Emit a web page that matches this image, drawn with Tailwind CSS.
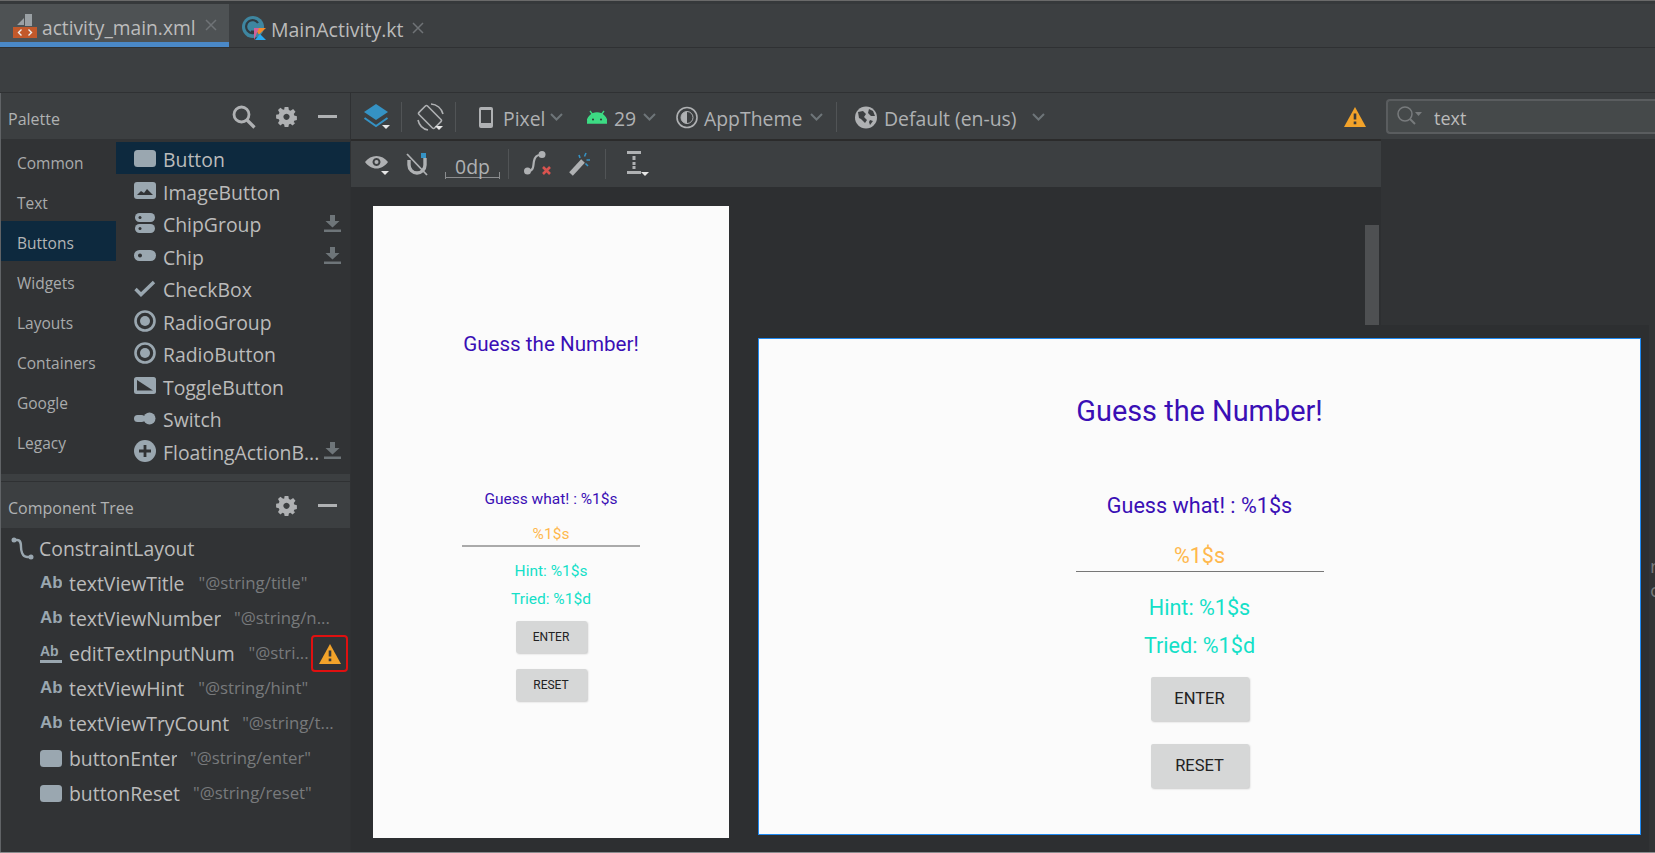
<!DOCTYPE html>
<html>
<head>
<meta charset="utf-8">
<script src="https://cdn.jsdelivr.net/npm/@tailwindcss/browser@4"></script>
</head>
<body class="m-0 overflow-hidden bg-[#313335]">
<svg class="hidden" width="0" height="0">
  <symbol id="gear" viewBox="0 0 20 20"><path fill="#afb1b3" fill-rule="evenodd" d="M8 0h4l.5 3 1.8.8L17 2l2.5 3-1.8 2.4.5 1.6 2.800.8v4l-2.800.6-.6 1.700L19.200 17 16.500 19.500 14 17.800l-1.500.6L12 21H8l-.5-2.600-1.600-.6-2.400 1.700L1 17l1.500-2.500-.6-1.700L-1 12.200v-4l2.900-.6.600-1.800L1 3.200 3.500.700 6 2.500 7.500 2.900zM10 7a3.300 3.300 0 1 0 .01 0z" transform="translate(1 1) scale(.9)"/></symbol>
  <symbol id="dl" viewBox="0 0 17 17"><path fill="#6e7579" d="M6 0h5v6h4.500L8.500 12.500 1.500 6H6zM0 14.500h17V17H0z"/></symbol>
  <symbol id="warn" viewBox="0 0 22 20"><path fill="#f2a32a" d="M11 0l11 20H0z"/><path fill="#3a3a3a" d="M9.700 6.500h2.600v6h-2.600zM9.700 14.500h2.600v2.800h-2.600z"/></symbol>
  <symbol id="ab" viewBox="0 0 22 18"><text x="0" y="13" font-family="Liberation Sans" font-weight="700" font-size="17" fill="#9aa7b0">Ab</text></symbol>
  <symbol id="btn" viewBox="0 0 22 17"><rect width="22" height="17" rx="3.500" fill="#9aa7b0"/></symbol>
  <symbol id="chev" viewBox="0 0 13 8"><path fill="none" stroke="#6e7579" stroke-width="2" d="M1 1l5.500 5.500L12 1"/></symbol>
</svg>

<div class="relative w-[1655px] h-[853px] overflow-hidden flex flex-col font-['Open_Sans',sans-serif] text-[#bbbbbb]">

  <!-- top strip + tabs -->
  <div class="h-[48px] shrink-0 bg-[#3c3f41] border-t border-t-[#6a6a6a] flex flex-col">
    <div class="h-[4px] bg-[#36393b]"></div>
    <div class="flex-1 flex border-b border-[#2f3133]">
      <div class="w-[229px] h-[43px] bg-[#4e5254] border-b-[5px] border-[#4a88c7] flex items-center pl-[13px]">
        <svg width="24" height="24" viewBox="0 0 24 24" class="shrink-0 mt-[6px]"><path fill="#9aa0a4" d="M4 11L11 4v7zM12 0h7v12H4v0h8z"/><path fill="#9aa0a4" d="M12 0h7v12h-7z"/><rect x="0" y="13" width="24" height="11" fill="#c2592b"/><path fill="none" stroke="#eeeeee" stroke-width="1.400" d="M8.500 15.500l-3 3 3 3M15.500 15.500l3 3-3 3"/></svg>
        <span class="ml-[5px] w-[152px] text-[19.200px] leading-none whitespace-nowrap text-[#bcbcbc] mt-[9px]">activity_main.xml</span>
        <svg width="12" height="12" viewBox="0 0 12 12" class="ml-[11px] mt-[4px]"><path stroke="#6f7376" stroke-width="1.500" d="M1 1l10 10M11 1L1 11"/></svg>
      </div>
      <div class="flex items-center pl-[13px] h-[43px]">
        <svg width="24" height="24" viewBox="0 0 24 24" class="shrink-0 mt-[5px]"><circle cx="11" cy="11" r="11" fill="#3e86a0"/><path fill="none" stroke="#2f3b42" stroke-width="2.200" d="M16 7a6.500 6.500 0 1 0-1 8.500H9"/><path fill="#f28a2a" d="M12 12h12l-7 6.500z"/><path fill="#29a9ef" d="M24 24H13l5-6z"/><path fill="#d0609a" d="M12 12h5l-5 12z"/></svg>
        <span class="ml-[5px] text-[19.500px] leading-none whitespace-nowrap w-[131px] mt-[9px]">MainActivity.kt</span>
        <svg width="12" height="12" viewBox="0 0 12 12" class="ml-[10px] mt-[4px]"><path stroke="#6f7376" stroke-width="1.500" d="M1 1l10 10M11 1L1 11"/></svg>
      </div>
    </div>
  </div>

  <!-- empty toolbar -->
  <div class="h-[45px] shrink-0 bg-[#3c3f41] border-b border-[#2f3133]"></div>

  <div class="flex-1 flex min-h-0">
    <!-- left column -->
    <div class="w-[351px] shrink-0 flex flex-col border-l border-[#606366] border-r-[1px] border-r-[#2f3133] bg-[#313335]">
      <!-- palette header -->
      <div class="h-[46px] shrink-0 bg-[#3c3f41] flex items-center">
        <span class="ml-[7px] w-[53px] text-[16px] text-[#b0b2b3] leading-none mt-[6px]">Palette</span>
        <svg width="24" height="24" viewBox="0 0 24 24" class="ml-[171px] mt-[1px]"><circle cx="9.500" cy="9.500" r="7.500" fill="none" stroke="#afb1b3" stroke-width="2.800"/><path stroke="#afb1b3" stroke-width="3.200" d="M15 15l7.500 7.500"/></svg>
        <svg width="21" height="21" class="ml-[20px] mt-[1px]"><use href="#gear"/></svg>
        <span class="ml-[21px] w-[19px] h-[3px] bg-[#afb1b3] mt-[1px]"></span>
      </div>
      <!-- palette body -->
      <div class="h-[335px] shrink-0 flex">
        <div class="w-[115px] shrink-0 flex flex-col pt-[2px] text-[15.500px] text-[#a9abac]">
          <div class="h-[40px] flex items-center pl-[16px] pt-[6px]">Common</div>
          <div class="h-[40px] flex items-center pl-[16px] pt-[6px]">Text</div>
          <div class="h-[40px] flex items-center pl-[16px] pt-[6px] bg-[#0d293e] text-[#b3b5b6]">Buttons</div>
          <div class="h-[40px] flex items-center pl-[16px] pt-[6px]">Widgets</div>
          <div class="h-[40px] flex items-center pl-[16px] pt-[6px]">Layouts</div>
          <div class="h-[40px] flex items-center pl-[16px] pt-[6px]">Containers</div>
          <div class="h-[40px] flex items-center pl-[16px] pt-[6px]">Google</div>
          <div class="h-[40px] flex items-center pl-[16px] pt-[6px]">Legacy</div>
        </div>
        <div class="flex-1 flex flex-col pt-[3px] text-[19.400px]">
          <div class="h-[32px] flex items-center pl-[18px] bg-[#0d293e]"><svg width="22" height="17"><use href="#btn"/></svg><span class="ml-[7px] leading-none mt-[4px]">Button</span></div>
          <div class="h-[33px] flex items-center pl-[18px]"><svg width="22" height="17" viewBox="0 0 22 17"><rect width="22" height="17" rx="3" fill="#9aa7b0"/><path fill="#313335" d="M3 13l4-4 3 2 3-4 6 6z"/></svg><span class="ml-[7px] leading-none mt-[4px]">ImageButton</span></div>
          <div class="h-[32px] flex items-center pl-[18px] pr-[9px]"><svg width="22" height="20" viewBox="0 0 22 20"><rect x="1" width="20" height="9" rx="4.500" fill="#9aa7b0"/><rect x="1" y="11" width="20" height="9" rx="4.500" fill="#9aa7b0"/><circle cx="6" cy="4.500" r="1.500" fill="#313335"/><circle cx="6" cy="15.500" r="1.500" fill="#313335"/></svg><span class="ml-[7px] leading-none flex-1 mt-[4px]">ChipGroup</span><svg width="17" height="19"><use href="#dl"/></svg></div>
          <div class="h-[33px] flex items-center pl-[18px] pr-[9px]"><svg width="22" height="11" viewBox="0 0 22 11"><rect width="22" height="11" rx="5.500" fill="#9aa7b0"/><circle cx="6" cy="5.500" r="2" fill="#313335"/></svg><span class="ml-[7px] leading-none flex-1 mt-[4px]">Chip</span><svg width="17" height="19"><use href="#dl"/></svg></div>
          <div class="h-[32px] flex items-center pl-[18px]"><svg width="22" height="17" viewBox="0 0 22 17"><path fill="none" stroke="#9aa7b0" stroke-width="3.400" d="M1.500 9l5.500 5.500L20 2"/></svg><span class="ml-[7px] leading-none mt-[4px]">CheckBox</span></div>
          <div class="h-[33px] flex items-center pl-[18px]"><svg width="22" height="22" viewBox="0 0 22 22"><circle cx="11" cy="11" r="9.500" fill="none" stroke="#9aa7b0" stroke-width="2.600"/><circle cx="11" cy="11" r="5" fill="#9aa7b0"/></svg><span class="ml-[7px] leading-none mt-[4px]">RadioGroup</span></div>
          <div class="h-[32px] flex items-center pl-[18px]"><svg width="22" height="22" viewBox="0 0 22 22"><circle cx="11" cy="11" r="9.500" fill="none" stroke="#9aa7b0" stroke-width="2.600"/><circle cx="11" cy="11" r="5" fill="#9aa7b0"/></svg><span class="ml-[7px] leading-none mt-[4px]">RadioButton</span></div>
          <div class="h-[33px] flex items-center pl-[18px]"><svg width="22" height="17" viewBox="0 0 22 17"><rect width="22" height="17" rx="2.500" fill="#9aa7b0"/><path fill="#313335" d="M3 3v10.500h16z"/></svg><span class="ml-[7px] leading-none mt-[4px]">ToggleButton</span></div>
          <div class="h-[32px] flex items-center pl-[18px]"><svg width="22" height="13" viewBox="0 0 22 13"><rect y="3" width="11" height="7" rx="3.500" fill="#9aa7b0"/><circle cx="15.500" cy="6.500" r="6" fill="#9aa7b0"/></svg><span class="ml-[7px] leading-none mt-[4px]">Switch</span></div>
          <div class="h-[33px] flex items-center pl-[18px] pr-[9px]"><svg width="22" height="22" viewBox="0 0 22 22" class="shrink-0"><circle cx="11" cy="11" r="11" fill="#9aa7b0"/><path stroke="#313335" stroke-width="2.800" d="M11 5v12M5 11h12"/></svg><span class="ml-[7px] leading-none flex-1 whitespace-nowrap mt-[4px]">FloatingActionB...</span><svg width="17" height="19" class="shrink-0"><use href="#dl"/></svg></div>
        </div>
      </div>
      <div class="h-[8px] shrink-0 bg-[#3c3f41] border-b border-[#2f3133]"></div>
      <!-- tree header -->
      <div class="h-[46px] shrink-0 bg-[#3c3f41] flex items-center">
        <span class="ml-[7px] w-[248px] whitespace-nowrap text-[16px] text-[#b0b2b3] leading-none mt-[5px]">Component Tree</span>
        <svg width="21" height="21" class="ml-[20px]"><use href="#gear"/></svg>
        <span class="ml-[21px] w-[19px] h-[3px] bg-[#afb1b3]"></span>
      </div>
      <!-- tree -->
      <div class="flex-1 flex flex-col pt-[3px] text-[19.400px]">
        <div class="h-[35px] flex items-center pl-[10px]"><svg width="23" height="23" viewBox="0 0 23 23"><circle cx="3" cy="3" r="2.500" fill="#9aa7b0"/><circle cx="20" cy="20" r="2.500" fill="#9aa7b0"/><path fill="none" stroke="#9aa7b0" stroke-width="2.400" d="M3 3h3c4 0 4 4 4 7s1 10 6 10h4"/></svg><span class="ml-[5px] leading-none">ConstraintLayout</span></div>
        <div class="h-[35px] flex items-center pl-[39px]"><svg width="22" height="18"><use href="#ab"/></svg><span class="ml-[7px] leading-none">textViewTitle</span><span class="ml-[14px] text-[16.800px] text-[#787a7c] leading-none whitespace-nowrap">"@string/title"</span></div>
        <div class="h-[35px] flex items-center pl-[39px]"><svg width="22" height="18"><use href="#ab"/></svg><span class="ml-[7px] leading-none w-[152px] whitespace-nowrap overflow-hidden">textViewNumber</span><span class="ml-[13px] text-[16.800px] text-[#787a7c] leading-none whitespace-nowrap">"@string/n...</span></div>
        <div class="h-[35px] flex items-center pl-[39px] relative"><svg width="22" height="20" viewBox="0 0 22 20"><text x="0" y="12" font-family="Liberation Sans" font-weight="700" font-size="14" fill="#9aa7b0">Ab</text><rect y="16" width="22" height="3" fill="#9aa7b0"/></svg><span class="ml-[7px] leading-none">editTextInputNum</span><span class="ml-[14px] text-[16.800px] text-[#787a7c] leading-none whitespace-nowrap">"@stri...</span>
          <div class="absolute left-[310px] top-[-1px] w-[37px] h-[37px] border-2 border-[#e01010] rounded-[4px] flex items-center justify-center"><svg width="22" height="20"><use href="#warn"/></svg></div>
        </div>
        <div class="h-[35px] flex items-center pl-[39px]"><svg width="22" height="18"><use href="#ab"/></svg><span class="ml-[7px] leading-none">textViewHint</span><span class="ml-[14px] text-[16.800px] text-[#787a7c] leading-none whitespace-nowrap">"@string/hint"</span></div>
        <div class="h-[35px] flex items-center pl-[39px]"><svg width="22" height="18"><use href="#ab"/></svg><span class="ml-[7px] leading-none">textViewTryCount</span><span class="ml-[13px] text-[16.800px] text-[#787a7c] leading-none whitespace-nowrap">"@string/t...</span></div>
        <div class="h-[35px] flex items-center pl-[39px]"><svg width="22" height="17"><use href="#btn"/></svg><span class="ml-[7px] w-[108px] overflow-hidden whitespace-nowrap leading-none">buttonEnter</span><span class="ml-[13px] text-[16.800px] text-[#787a7c] leading-none whitespace-nowrap">"@string/enter"</span></div>
        <div class="h-[35px] flex items-center pl-[39px]"><svg width="22" height="17"><use href="#btn"/></svg><span class="ml-[7px] leading-none">buttonReset</span><span class="ml-[13px] text-[16.800px] text-[#787a7c] leading-none whitespace-nowrap">"@string/reset"</span></div>
      </div>
    </div>

    <!-- design column -->
    <div class="w-[1030px] shrink-0 flex flex-col">
      <div class="h-[48px] shrink-0 bg-[#3c3f41] flex items-center pt-[2px] border-b-[2px] border-[#2b2b2b] text-[19.400px] text-[#afb1b3]">
        <svg width="28" height="28" viewBox="0 0 28 28" class="ml-[12px]"><path fill="#3592c4" d="M13 1l12 8-12 8L1 9z"/><path fill="none" stroke="#3592c4" stroke-width="2" d="M1.500 15l11.500 8 11.500-8"/><path fill="#e6e6e6" d="M19 22h8l-4 4z"/></svg>
        <span class="ml-[10px] w-px h-[30px] bg-[#515456]"></span>
        <svg width="28" height="28" viewBox="0 0 28 28" class="ml-[15px]"><g fill="none" stroke="#afb1b3" stroke-width="1.600"><rect x="7" y="3" width="12" height="22" rx="1.500" transform="rotate(-45 13 14)"/><path d="M14 1A13 13 0 0 1 26 11M1 17A13 13 0 0 0 11 27"/></g><path fill="#e6e6e6" d="M18 23h8l-4 4z"/></svg>
        <span class="ml-[10px] w-px h-[30px] bg-[#515456]"></span>
        <svg width="14" height="21" viewBox="0 0 14 21" class="ml-[23px]"><path fill="#afb1b3" fill-rule="evenodd" d="M2 0h10a2 2 0 0 1 2 2v17a2 2 0 0 1-2 2H2a2 2 0 0 1-2-2V2a2 2 0 0 1 2-2zM2 3v13h10V3z"/></svg>
        <span class="ml-[10px] leading-none w-[40px] mt-[3px]">Pixel</span>
        <svg width="13" height="8" class="ml-[7px]"><use href="#chev"/></svg>
        <svg width="20" height="14" viewBox="0 0 20 14" class="ml-[24px]"><path fill="#3ddc84" d="M0 13a10 10 0 0 1 20 0zM3 1l3 4M17 1l-3 4" stroke="#3ddc84" stroke-width="1.300"/><circle cx="6" cy="9.500" r="1" fill="#313335"/><circle cx="14" cy="9.500" r="1" fill="#313335"/></svg>
        <span class="ml-[7px] leading-none w-[22px] mt-[3px]">29</span>
        <svg width="13" height="8" class="ml-[7px]"><use href="#chev"/></svg>
        <svg width="22" height="23" viewBox="0 0 22 23" class="ml-[20px]"><circle cx="11" cy="11.500" r="10" fill="none" stroke="#afb1b3" stroke-width="1.600"/><path fill="#afb1b3" d="M11 5.500a6 6 0 0 0 0 12z"/><circle cx="11" cy="11.500" r="6" fill="none" stroke="#afb1b3"/></svg>
        <span class="ml-[6px] leading-none w-[100px] mt-[3px]">AppTheme</span>
        <svg width="13" height="8" class="ml-[6px]"><use href="#chev"/></svg>
        <span class="ml-[13px] w-px h-[30px] bg-[#515456]"></span>
        <svg width="22" height="23" viewBox="0 0 22 23" class="ml-[18px]"><circle cx="11" cy="11.500" r="11" fill="#afb1b3"/><path fill="#3c3f41" d="M3 6l5-1 3 3-2 3 3 3-2 3-4-4-2-1zM14 3l4 2 2 5-4 0-3-3zM15 14l3 1-3 4-1-3z"/></svg>
        <span class="ml-[7px] leading-none w-[134px] whitespace-nowrap mt-[3px]">Default (en-us)</span>
        <svg width="13" height="8" class="ml-[14px]"><use href="#chev"/></svg>
        <svg width="22" height="20" class="ml-[299px]"><use href="#warn"/></svg>
      </div>
      <div class="h-[46px] shrink-0 bg-[#3c3f41] flex items-center text-[#afb1b3]">
        <svg width="25" height="23" viewBox="0 0 25 23" class="ml-[14px]"><path fill="#afb1b3" fill-rule="evenodd" d="M0 9c3-4 7-6 11.500-6S20 5 23 9c-3 4-7 6.500-11.500 6.500S3 13 0 9zm11.500-4a4 4 0 1 0 .01 0z"/><circle cx="11.500" cy="9" r="2" fill="#afb1b3"/><path fill="#e6e6e6" d="M16 18h8l-4 4z"/></svg>
        <svg width="22" height="23" viewBox="0 0 22 23" class="ml-[16px]"><path fill="none" stroke="#afb1b3" stroke-width="3.400" d="M3 7v5a8 8 0 0 0 16 0V5"/><path stroke="#afb1b3" stroke-width="1.800" d="M1 1l20 21"/><rect x="15" width="5" height="5" fill="#3592c4"/></svg>
        <div class="ml-[17px] w-[55px] h-[28px] flex flex-col items-center justify-end border-b border-[#8a8c8e] relative">
          <span class="text-[19.400px] leading-none mb-[1px]">0dp</span>
          <span class="absolute left-0 bottom-[-2px] w-px h-[7px] bg-[#8a8c8e]"></span><span class="absolute right-0 bottom-[-2px] w-px h-[7px] bg-[#8a8c8e]"></span>
        </div>
        <span class="ml-[8px] w-px h-[30px] bg-[#515456]"></span>
        <svg width="28" height="26" viewBox="0 0 28 26" class="ml-[15px]"><circle cx="3.500" cy="20" r="3.500" fill="#afb1b3"/><circle cx="18" cy="3.500" r="3.500" fill="#afb1b3"/><path fill="none" stroke="#afb1b3" stroke-width="2.200" d="M5 20c5-1 4-5 5-10s3-6 6-6"/><path stroke="#d9534f" stroke-width="2.600" d="M19 16l7 7M26 16l-7 7"/></svg>
        <svg width="22" height="24" viewBox="0 0 22 24" class="ml-[17px]"><path stroke="#afb1b3" stroke-width="5" d="M2 22L14 9"/><path stroke="#3592c4" stroke-width="1.600" d="M10 3l1 3M17 1l-1.500 3.500M21 8h-3.500M19 14l-2.500-2.500"/></svg>
        <span class="ml-[14px] w-px h-[30px] bg-[#515456]"></span>
        <svg width="26" height="26" viewBox="0 0 26 26" class="ml-[21px]"><path fill="#afb1b3" d="M0 0h14v3H0zM0 20h14v3H0zM5.500 5h3v4h-3zM5.500 11h3v3h-3zM5.500 15h3v3h-3z"/><path fill="#e6e6e6" d="M14 21h8l-4 4z"/></svg>
      </div>
      <div class="flex-1 bg-[#2d2f31] pt-[19px] pl-[22px] relative">
        <!-- portrait preview -->
        <div class="w-[356px] h-[632px] bg-[#fbfbfb] flex flex-col items-center font-['Roboto',sans-serif]">
          <div class="mt-[124px] text-[20.600px] leading-[28px] text-[#3a0fb5] whitespace-nowrap">Guess the Number!</div>
          <div class="mt-[131px] text-[15.500px] leading-[20px] text-[#3a0fb5] whitespace-nowrap">Guess what! : %1$s</div>
          <div class="mt-[15px] w-[178px] h-[23px] border-b-2 border-[#aaaaaa] text-center text-[15.500px] leading-[20px] text-[#ffb84d]">%1$s</div>
          <div class="mt-[14px] text-[15.500px] leading-[20px] text-[#14e0c8] whitespace-nowrap">Hint: %1$s</div>
          <div class="mt-[8px] text-[15.500px] leading-[20px] text-[#14e0c8] whitespace-nowrap">Tried: %1$d</div>
          <div class="mt-[12px] w-[71px] h-[32px] bg-[#d6d7d7] rounded-[2px] shadow-[1px_1px_2px_rgba(0,0,0,0.2)] flex items-center justify-center text-[12px] font-normal text-[#222222]">ENTER</div>
          <div class="mt-[16px] w-[71px] h-[32px] bg-[#d6d7d7] rounded-[2px] shadow-[1px_1px_2px_rgba(0,0,0,0.2)] flex items-center justify-center text-[12px] font-normal text-[#222222]">RESET</div>
        </div>
        <div class="absolute right-[2px] top-[38px] w-[14px] h-[100px] bg-[#4e5052]"></div>
        <svg width="12" height="8" viewBox="0 0 12 8" class="absolute left-[713px] bottom-0"><path stroke="#777777" stroke-width="1.200" d="M1 9L8 1"/></svg>
      </div>
    </div>

    <!-- right column -->
    <div class="flex-1 flex flex-col min-w-0 bg-[#313335]">
      <div class="h-[46px] shrink-0 bg-[#3c3f41] pl-[5px] flex items-center">
        <div class="flex-1 h-[35px] bg-[#45494a] border-2 border-r-0 border-[#5a5d5f] rounded-l-[4px] flex items-center pl-[9px]">
          <svg width="25" height="20" viewBox="0 0 25 20"><circle cx="8" cy="8" r="7" fill="none" stroke="#787b7d" stroke-width="1.500"/><path stroke="#787b7d" stroke-width="2" d="M13 13l5 5"/><path fill="#787b7d" d="M18 6h7l-3.500 4z"/></svg>
          <span class="ml-[12px] text-[18px] leading-none text-[#bbbbbb] mt-[3px]">text</span>
        </div>
      </div>
    </div>
  </div>

  <!-- remnants of the panel text showing beyond the floating preview -->
  <span class="absolute left-[1650px] top-[557px] text-[19px] leading-none text-[#77797b]">n</span>
  <span class="absolute left-[1650px] top-[581px] text-[19px] leading-none text-[#77797b]">c</span>

  <!-- landscape preview window: floats over the design and right columns -->
  <div class="absolute left-[758px] top-[325px] w-[891px] h-[527px] bg-[#2d2f31]">
    <div class="mt-[13px] w-[883px] h-[497px] bg-[#fbfbfb] border border-[#1f8af2] flex flex-col items-center font-['Roboto',sans-serif]">
      <div class="mt-[52px] text-[28.900px] leading-[40px] text-[#3a0fb5] whitespace-nowrap">Guess the Number!</div>
      <div class="mt-[60px] text-[21.600px] leading-[30px] text-[#3a0fb5] whitespace-nowrap">Guess what! : %1$s</div>
      <div class="mt-[20px] w-[248px] h-[30px] border-b border-[#777777] text-center text-[21.600px] leading-[30px] text-[#ffb84d] box-content">%1$s</div>
      <div class="mt-[21px] text-[21.600px] leading-[30px] text-[#14e0c8] whitespace-nowrap">Hint: %1$s</div>
      <div class="mt-[8px] text-[21.600px] leading-[30px] text-[#14e0c8] whitespace-nowrap">Tried: %1$d</div>
      <div class="mt-[16px] w-[98px] h-[44px] bg-[#d6d7d7] rounded-[2px] shadow-[1px_1px_2px_rgba(0,0,0,0.2)] flex items-center justify-center text-[16.500px] font-normal text-[#222222]">ENTER</div>
      <div class="mt-[23px] w-[98px] h-[44px] bg-[#d6d7d7] rounded-[2px] shadow-[1px_1px_2px_rgba(0,0,0,0.2)] flex items-center justify-center text-[16.500px] font-normal text-[#222222]">RESET</div>
    </div>
  </div>
  <div class="absolute left-0 right-0 bottom-0 h-px bg-[#8a8c8e]"></div>
</div>
</body>
</html>
